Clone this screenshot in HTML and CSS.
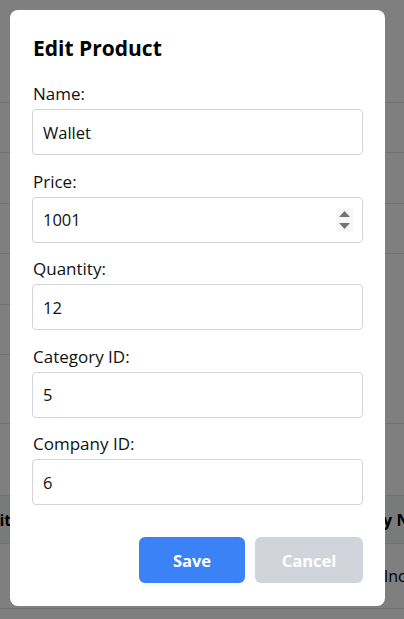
FILE: index.html
```html
<!DOCTYPE html>
<html lang="en">
<head>
<meta charset="utf-8">
<title>Edit Product</title>
<link rel="stylesheet" href="styles.css">
</head>
<body>
  <div class="table">
    <div class="row r1"></div>
    <div class="row r2"></div>
    <div class="row r3"></div>
    <div class="row r4"></div>
    <div class="row r5 half"></div>
    <div class="row r6 half"></div>
    <div class="row r7"></div>
    <div class="row r8"></div>
    <div class="row head">
      <span class="cell-left">Quantity</span>
      <span class="cell-right head-right">Company Name</span>
    </div>
    <div class="row body-row">
      <span class="cell-left"></span>
      <span class="cell-right body-right">Acme Inc</span>
    </div>
  </div>

  <div class="overlay">
    <form class="modal">
      <h2 class="title">Edit Product</h2>

      <div class="field">
        <label class="label" for="name">Name:</label>
        <input class="input" id="name" type="text" value="Wallet">
      </div>

      <div class="field">
        <label class="label" for="price">Price:</label>
        <div class="num-wrap">
          <input class="input" id="price" type="number" value="1001">
          <span class="spinner">
            <svg width="11" height="18" viewBox="0 0 11 18"><path d="M5.5 0 L11 6 L0 6 Z" fill="#757575"/><path d="M0 12 L11 12 L5.5 18 Z" fill="#757575"/></svg>
          </span>
        </div>
      </div>

      <div class="field">
        <label class="label" for="qty">Quantity:</label>
        <input class="input" id="qty" type="text" value="12">
      </div>

      <div class="field">
        <label class="label" for="cat">Category ID:</label>
        <input class="input" id="cat" type="text" value="5">
      </div>

      <div class="field">
        <label class="label" for="comp">Company ID:</label>
        <input class="input" id="comp" type="text" value="6">
      </div>

      <div class="actions">
        <button type="button" class="btn btn-save">Save</button>
        <button type="button" class="btn btn-cancel">Cancel</button>
      </div>
    </form>
  </div>
</body>
</html>
```

FILE: styles.css
```css
* { box-sizing: border-box; }

html, body {
  margin: 0;
  padding: 0;
  width: 404px;
  height: 619px;
  overflow: hidden;
  background: #ffffff;
  font-family: "Open Sans", "Noto Sans", sans-serif;
  color: #000;
}

.table {
  display: flex;
  flex-direction: column;
  width: 404px;
  overflow: hidden;
}

.row {
  border-bottom: 1px solid #e2e2e2;
  position: relative;
  flex: none;
}

.row.half { border-bottom-color: transparent; }
.row.half::after {
  content: "";
  position: absolute;
  left: 0;
  bottom: -1px;
  width: 120px;
  height: 1px;
  background: #e2e2e2;
}

.r1 { height: 103px; }
.r2 { height: 50px; }
.r3 { height: 51px; }
.r4 { height: 50px; }
.r5 { height: 51px; }
.r6 { height: 50px; }
.r7 { height: 69px; }
.r8 { height: 72px; }

.head {
  height: 48px;
  background: #f3f4f5;
  display: flex;
  align-items: center;
  font-weight: 700;
  font-size: 16px;
}

.body-row {
  height: 65px;
  display: flex;
  align-items: center;
  font-size: 16px;
}

.cell-left { flex: none; margin-left: -51px; }
.cell-right { flex: none; width: 140px; white-space: nowrap; margin-left: auto; }
.head-right { margin-right: -53px; }
.body-right { margin-right: -74px; font-weight: 400; }

.overlay {
  position: fixed;
  inset: 0;
  background: rgba(0, 0, 0, 0.5);
  display: flex;
  align-items: flex-start;
  justify-content: flex-start;
  padding: 10px;
}

.modal {
  width: 375px;
  background: #ffffff;
  border-radius: 8px;
  padding: 24px 22px 23px 22px;
  display: flex;
  flex-direction: column;
}

.title {
  margin: 0 0 21px 1px;
  font-size: 21px;
  line-height: 28px;
  font-weight: 700;
  color: #000;
}

.field {
  display: flex;
  flex-direction: column;
  margin-bottom: 15.5px;
}

.label {
  display: block;
  font-size: 17px;
  line-height: 24px;
  margin: -1px 0 3px 1px;
  color: #111;
}

.input {
  width: 331px;
  height: 46px;
  border: 1px solid #d4d4d8;
  border-radius: 4px;
  padding: 0 10px;
  font-family: inherit;
  font-size: 16.5px;
  color: #111;
  background: #fff;
  outline: none;
  -moz-appearance: textfield;
}

.input::-webkit-inner-spin-button,
.input::-webkit-outer-spin-button {
  -webkit-appearance: none;
  margin: 0;
}

.num-wrap {
  position: relative;
  width: 331px;
}

.spinner {
  position: absolute;
  top: 11px;
  right: 10px;
  width: 17px;
  height: 24px;
  background: #f7f7f7;
  display: flex;
  align-items: center;
  justify-content: center;
}

.spinner svg { display: block; }

.actions {
  display: flex;
  justify-content: flex-end;
  gap: 10px;
  margin-top: 16.5px;
}

.btn {
  height: 46px;
  border: none;
  border-radius: 6px;
  font-family: inherit;
  font-size: 16.5px;
  font-weight: 700;
  color: #fff;
  cursor: pointer;
  padding: 0;
}

.btn-save { width: 106px; background: #3b82f6; }
.btn-cancel { width: 108px; background: #d1d5db; }
```
